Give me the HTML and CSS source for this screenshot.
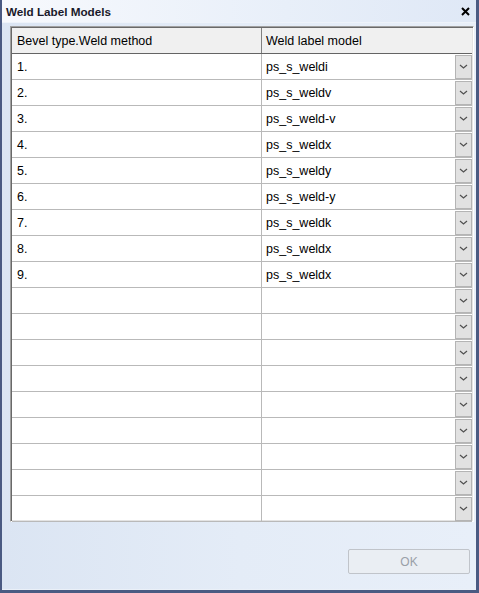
FILE: index.html
```html
<!DOCTYPE html>
<html>
<head>
<meta charset="utf-8">
<link rel="stylesheet" href="styles.css">
</head>
<body>
<div class="window">
  <div class="titlebar">
    <span class="title">Weld Label Models</span>
    <svg class="close" width="9" height="9" viewBox="0 0 9 9"><path d="M1 1 L8 8 M8 1 L1 8" stroke="#000" stroke-width="2"/></svg>
  </div>
  <div class="content">
    <div class="grid">
      <div class="row header">
        <div class="c1">Bevel type.Weld method</div>
        <div class="c2">Weld label model</div>
      </div>
      <div class="row"><div class="c1">1.</div><div class="c2"><span>ps_s_weldi</span><i class="dd"></i></div></div>
      <div class="row"><div class="c1">2.</div><div class="c2"><span>ps_s_weldv</span><i class="dd"></i></div></div>
      <div class="row"><div class="c1">3.</div><div class="c2"><span>ps_s_weld-v</span><i class="dd"></i></div></div>
      <div class="row"><div class="c1">4.</div><div class="c2"><span>ps_s_weldx</span><i class="dd"></i></div></div>
      <div class="row"><div class="c1">5.</div><div class="c2"><span>ps_s_weldy</span><i class="dd"></i></div></div>
      <div class="row"><div class="c1">6.</div><div class="c2"><span>ps_s_weld-y</span><i class="dd"></i></div></div>
      <div class="row"><div class="c1">7.</div><div class="c2"><span>ps_s_weldk</span><i class="dd"></i></div></div>
      <div class="row"><div class="c1">8.</div><div class="c2"><span>ps_s_weldx</span><i class="dd"></i></div></div>
      <div class="row"><div class="c1">9.</div><div class="c2"><span>ps_s_weldx</span><i class="dd"></i></div></div>
      <div class="row"><div class="c1"></div><div class="c2"><span></span><i class="dd"></i></div></div>
      <div class="row"><div class="c1"></div><div class="c2"><span></span><i class="dd"></i></div></div>
      <div class="row"><div class="c1"></div><div class="c2"><span></span><i class="dd"></i></div></div>
      <div class="row"><div class="c1"></div><div class="c2"><span></span><i class="dd"></i></div></div>
      <div class="row"><div class="c1"></div><div class="c2"><span></span><i class="dd"></i></div></div>
      <div class="row"><div class="c1"></div><div class="c2"><span></span><i class="dd"></i></div></div>
      <div class="row"><div class="c1"></div><div class="c2"><span></span><i class="dd"></i></div></div>
      <div class="row"><div class="c1"></div><div class="c2"><span></span><i class="dd"></i></div></div>
      <div class="row"><div class="c1"></div><div class="c2"><span></span><i class="dd"></i></div></div>
    </div>
    <div class="footer">
      <button class="ok" disabled>OK</button>
    </div>
  </div>
</div>
</body>
</html>
```
FILE: styles.css
```css
html, body { margin: 0; padding: 0; }
body { width: 479px; height: 593px; overflow: hidden; font-family: "Liberation Sans", Arial, sans-serif; font-size: 12px; color: #000; }
.window {
  width: 479px; height: 593px; box-sizing: border-box;
  border-left: 2px solid #4a5a82; border-right: 3px solid #4a5a82; border-bottom: 3px solid #4a5a82;
  background: #dce6f4;
  display: flex; flex-direction: column;
}
.titlebar {
  height: 22px; flex: none; display: flex; align-items: center; justify-content: space-between;
  background: linear-gradient(to right, #f7f9fd, #e8eff9 60%, #dfe8f6);
  border-bottom: 1px solid #eef3fa;
  padding: 0 6px 0 4px;
}
.title { font-weight: bold; font-size: 11.7px; color: #1a1a2a; font-family: "Liberation Sans", Arial, sans-serif; }
.close { display: block; }
.content { flex: 1; display: flex; flex-direction: column; padding: 3px 0 0 8px; border-right: 1px solid #eaf0f8; border-bottom: 1px solid #eaf0f8;
  background: linear-gradient(to right, #dbe5f3, #e4ecf7 50%, #e8eff9); }
.grid {
  width: 464px; box-sizing: border-box; height: 496px;
  border-top: 1px solid #a0a0a0; border-left: 1px solid #a0a0a0;
  border-right: 1px solid #fff; border-bottom: 1px solid #fff;
  box-shadow: inset 1px 1px 0 #696969, inset -1px -1px 0 #e3e3e3;
  background: #fff; padding: 1px;
  display: flex; flex-direction: column;
  font-family: "Liberation Sans", Arial, sans-serif; font-size: 12.5px;
}
.row { display: flex; height: 26px; box-sizing: border-box; border-bottom: 1px solid #b9b9b9; flex: none; }
.row.header { height: 26px; background: #f0f0f0; border-bottom: 1px solid #646464; }
.c1 { width: 250px; flex: none; box-sizing: border-box; border-right: 1px solid #b9b9b9; padding-left: 5px; display: flex; align-items: center; }
.header .c1 { border-right: 1px solid #808080; }
.c2 { flex: 1; display: flex; align-items: center; justify-content: space-between; padding-left: 4px; padding-right: 0; }
.c2 span { flex: 1; }
.dd {
  display: block; width: 17px; height: 24px; box-sizing: border-box;
  background: #e1e1e1 url("data:image/svg+xml,%3Csvg xmlns='http://www.w3.org/2000/svg' width='9' height='5'%3E%3Cpath d='M1 1 L4.5 4 L8 1' fill='none' stroke='%23505050' stroke-width='1.2'/%3E%3C/svg%3E") no-repeat center;
  border: 1px solid #b4b4b4;
}
.footer { flex: 1; display: flex; justify-content: flex-end; align-items: flex-start; padding: 27px 5px 0 0; }
.ok {
  width: 122px; height: 25px; box-sizing: border-box;
  border: 1px solid #c0c4ca; border-radius: 2px; background: #eaeef3;
  color: #9aa0a8; font-family: "Liberation Sans", Arial, sans-serif; font-size: 12px;
}
```
